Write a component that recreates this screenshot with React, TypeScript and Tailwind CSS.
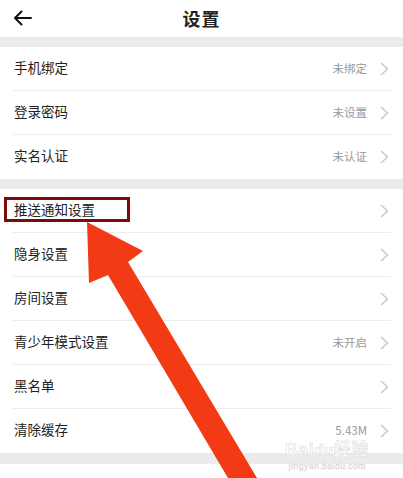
import React from 'react';

type Row = { label: string; value?: string };

const accountRows: Row[] = [
  { label: '手机绑定', value: '未绑定' },
  { label: '登录密码', value: '未设置' },
  { label: '实名认证', value: '未认证' },
];

const settingRows: Row[] = [
  { label: '推送通知设置' },
  { label: '隐身设置' },
  { label: '房间设置' },
  { label: '青少年模式设置', value: '未开启' },
  { label: '黑名单' },
  { label: '清除缓存', value: '5.43M' },
];

const Chevron = () => (
  <svg width="9" height="14" viewBox="0 0 9 14" fill="none" className="shrink-0">
    <path d="M1 1L7.5 7L1 13" stroke="#c4c4c4" strokeWidth="1.2" strokeLinejoin="round" />
  </svg>
);

const SettingRow: React.FC<{ row: Row; last?: boolean }> = ({ row, last }) => (
  <div className="relative h-[44px] px-[14px] flex items-center justify-between">
    <span className="text-[13.5px] leading-none text-[#222] -mt-[2px]">{row.label}</span>
    <div className="flex items-center gap-[13px]">
      {row.value && <span className="text-[11.5px] leading-none text-[#999]">{row.value}</span>}
      <Chevron />
    </div>
    {!last && <div className="absolute left-[13px] right-[12px] bottom-0 h-px bg-[#ececec]" />}
  </div>
);

export default function App() {
  return (
    <div
      className="relative w-[403px] h-[478px] overflow-hidden bg-white"
      style={{ fontFamily: '"Noto Sans CJK SC", "Noto Sans", sans-serif' }}
    >
      {/* header */}
      <div className="relative h-[37px] flex items-center justify-center">
        <svg width="19" height="16" viewBox="0 0 19 16" fill="none" className="absolute left-[13px] top-[10px]">
          <path d="M18 8H2M8.5 1.5L2 8L8.5 14.5" stroke="#111" strokeWidth="2" strokeLinecap="round" strokeLinejoin="round" />
        </svg>
        <span className="text-[18px] font-bold text-[#222] tracking-[1px]">设置</span>
      </div>

      <div className="h-[10px] bg-[#ebebeb]" />
      <div className="flex flex-col">
        {accountRows.map((r, i) => (
          <SettingRow key={r.label} row={r} last={i === accountRows.length - 1} />
        ))}
      </div>

      <div className="h-[10px] bg-[#ebebeb]" />
      <div className="flex flex-col">
        {settingRows.map((r, i) => (
          <SettingRow key={r.label} row={r} last={i === settingRows.length - 1} />
        ))}
      </div>

      <div className="h-[11px] bg-[#ebebeb]" />
      <SettingRow row={{ label: '关于我们' }} last />

      {/* highlight box */}
      <div className="absolute left-[4px] top-[197px] w-[126px] h-[25px] border-[3px] border-[#7d0a0a]" />

      {/* arrow */}
      <svg width="403" height="478" className="absolute left-0 top-0 pointer-events-none">
        <polygon
          points="87,222 143,251 128,262 257,478 228,478 108,275 89,283"
          fill="#f23a14"
        />
      </svg>

      {/* watermark */}
      <div className="absolute left-[285px] top-[441px] flex flex-col items-center leading-none pointer-events-none text-white [-webkit-text-stroke:0.5px_#d6d6d6]">
        <span className="text-[17px] font-bold tracking-[1px]" style={{ fontFamily: '"Liberation Sans", "Noto Sans CJK SC", sans-serif' }}>
          Bai<span className="text-[14px]">du</span>经验
        </span>
        <span className="text-[8.5px] mt-[4px] tracking-[0.5px]" style={{ fontFamily: '"Liberation Sans", sans-serif' }}>
          jingyan.baidu.com
        </span>
      </div>
    </div>
  );
}
